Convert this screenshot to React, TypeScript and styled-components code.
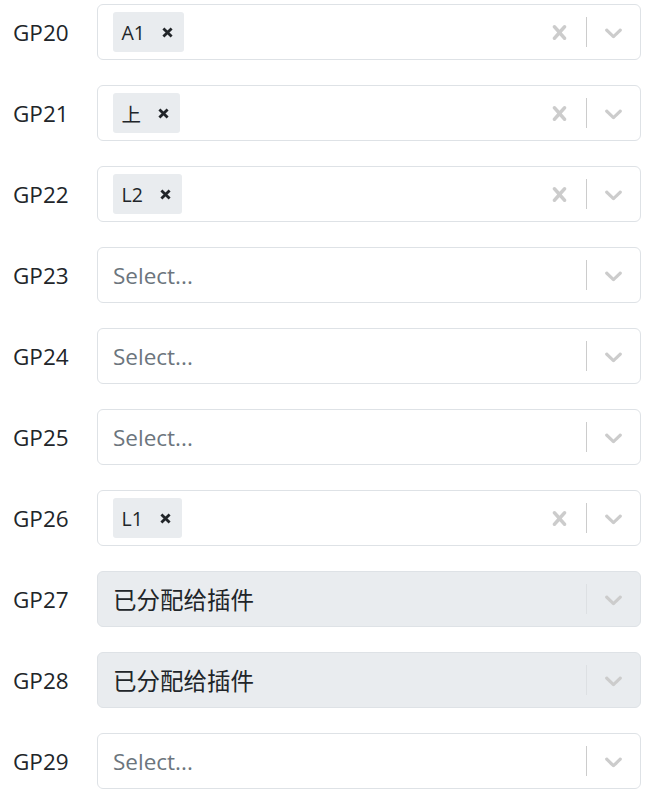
import React from "react";
import styled, { createGlobalStyle } from "styled-components";

const Global = createGlobalStyle`
  html, body { margin: 0; padding: 0; background: #fff; }
  body { font-family: "Open Sans", "Noto Sans", "Noto Sans CJK SC", sans-serif; color: #212529; }
`;

const Page = styled.div`
  display: flex;
  flex-direction: column;
  gap: 25px;
  padding: 4px 9px 0 13px;
`;

const Row = styled.div`
  display: flex;
  align-items: center;
  height: 56px;
`;

const Label = styled.div`
  width: 84px;
  flex: none;
  font-size: 22.5px;
  line-height: 1;
  padding-top: 2px;
`;

const Control = styled.div<{ $disabled?: boolean }>`
  flex: 1;
  height: 56px;
  box-sizing: border-box;
  display: flex;
  align-items: center;
  border: 1px solid #dee2e6;
  border-radius: 6px;
  background: ${(p) => (p.$disabled ? "#e9ecef" : "#fff")};
`;

const ValueArea = styled.div`
  flex: 1;
  display: flex;
  align-items: center;
  padding: 0 15px;
  min-width: 0;
`;

const Placeholder = styled.span`
  font-size: 22.5px;
  color: #6c757d;
`;

const SingleValue = styled.span`
  font-family: "Noto Sans CJK SC", sans-serif;
  font-size: 23.5px;
  color: #212529;
`;

const Tag = styled.div`
  display: flex;
  align-items: center;
  height: 40px;
  background: #e9ecef;
  border-radius: 3px;
  padding: 0 11px 0 8.5px;
`;

const TagText = styled.span`
  font-family: "Open Sans", "Noto Sans CJK SC", sans-serif;
  font-size: 19.5px;
  color: #212529;
  margin-right: 17px;
`;

const TagRemove = styled.span`
  display: flex;
  color: #212529;
`;

const Indicators = styled.div`
  display: flex;
  align-items: center;
  align-self: stretch;
`;

const Indicator = styled.div`
  display: flex;
  padding: 0 12px;
  color: #cccccc;
`;

const Separator = styled.span<{ $disabled?: boolean }>`
  align-self: stretch;
  width: 1px;
  margin: 12px 0;
  background: ${(p) => (p.$disabled ? "#dde0e3" : "#cccccc")};
`;

const crossPath =
  "M14.348 14.849c-0.469 0.469-1.229 0.469-1.697 0l-2.651-3.030-2.651 3.029c-0.469 0.469-1.229 0.469-1.697 0-0.469-0.469-0.469-1.229 0-1.697l2.758-3.15-2.759-3.152c-0.469-0.469-0.469-1.228 0-1.697s1.228-0.469 1.697 0l2.652 3.031 2.651-3.031c0.469-0.469 1.228-0.469 1.697 0s0.469 1.229 0 1.697l-2.758 3.152 2.758 3.15c0.469 0.469 0.469 1.229 0 1.698z";
const chevronPath =
  "M4.516 7.548c0.436-0.446 1.043-0.481 1.576 0l3.908 3.747 3.908-3.747c0.533-0.481 1.141-0.446 1.574 0 0.436 0.445 0.408 1.197 0 1.615-0.406 0.418-4.695 4.502-4.695 4.502-0.217 0.223-0.502 0.335-0.787 0.335s-0.57-0.112-0.789-0.335c0 0-4.287-4.084-4.695-4.502s-0.436-1.17 0-1.615z";

const Icon = ({ d, size }: { d: string; size: number }) => (
  <svg width={size} height={size} viewBox="0 0 20 20" fill="currentColor" aria-hidden="true">
    <path d={d} />
  </svg>
);

const SmallX = () => (
  <svg width="11" height="11" viewBox="0 0 11 11" aria-hidden="true">
    <path d="M1.4 1.4 L9.6 9.6 M9.6 1.4 L1.4 9.6" stroke="currentColor" strokeWidth="2.8" fill="none" />
  </svg>
);

type Item = { name: string; tag?: string; disabled?: boolean };

const items: Item[] = [
  { name: "GP20", tag: "A1" },
  { name: "GP21", tag: "上" },
  { name: "GP22", tag: "L2" },
  { name: "GP23" },
  { name: "GP24" },
  { name: "GP25" },
  { name: "GP26", tag: "L1" },
  { name: "GP27", disabled: true },
  { name: "GP28", disabled: true },
  { name: "GP29" },
];

export default function App() {
  return (
    <>
      <Global />
      <Page>
        {items.map((it) => (
          <Row key={it.name}>
            <Label>{it.name}</Label>
            <Control $disabled={it.disabled}>
              <ValueArea>
                {it.disabled ? (
                  <SingleValue>已分配给插件</SingleValue>
                ) : it.tag ? (
                  <Tag>
                    <TagText>{it.tag}</TagText>
                    <TagRemove>
                      <SmallX />
                    </TagRemove>
                  </Tag>
                ) : (
                  <Placeholder>Select...</Placeholder>
                )}
              </ValueArea>
              <Indicators>
                {it.tag && (
                  <Indicator>
                    <Icon d={crossPath} size={29} />
                  </Indicator>
                )}
                <Separator $disabled={it.disabled} />
                <Indicator>
                  <Icon d={chevronPath} size={29} />
                </Indicator>
              </Indicators>
            </Control>
          </Row>
        ))}
      </Page>
    </>
  );
}
